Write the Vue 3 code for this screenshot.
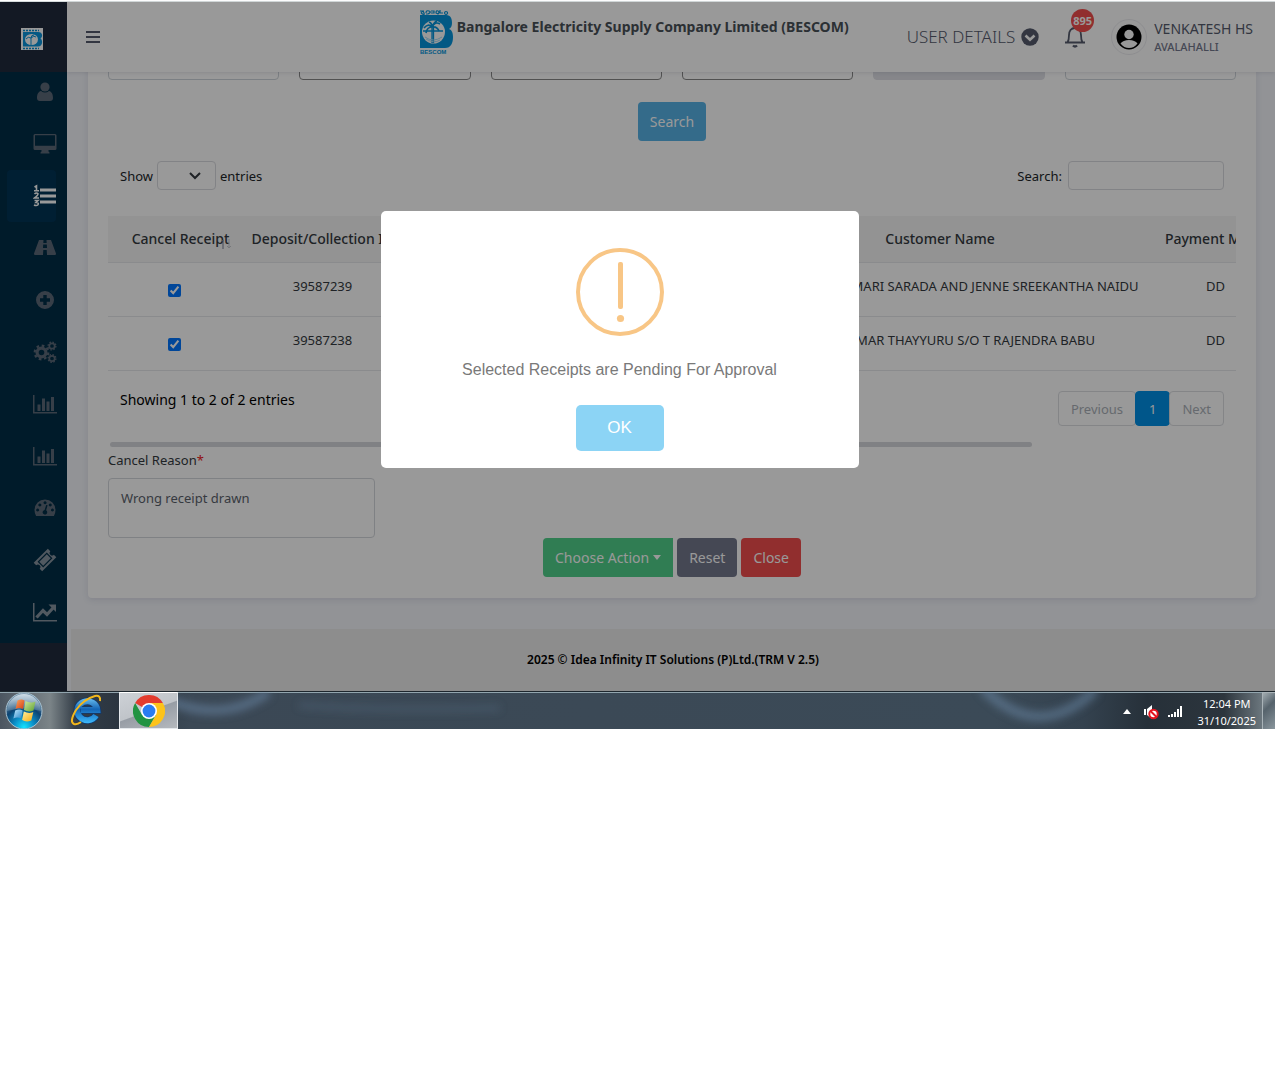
<script setup>
import { ref } from 'vue'

const navItems = [
  { name: 'Profile', icon: 'user' },
  { name: 'Dashboard', icon: 'desktop' },
  { name: 'Transactions', icon: 'list', active: true },
  { name: 'Routes', icon: 'road' },
  { name: 'Add', icon: 'plus' },
  { name: 'Settings', icon: 'cogs' },
  { name: 'Reports', icon: 'bars' },
  { name: 'MIS reports', icon: 'bars' },
  { name: 'Meters', icon: 'gauge' },
  { name: 'Tickets', icon: 'ticket' },
  { name: 'Trends', icon: 'trend' },
]

const filters = ['light', 'dark', 'dark', 'dark', 'disabled', 'light']

const rows = ref([
  { id: '39587239', customer: 'SMT BHAVANA KUMARI SARADA AND JENNE SREEKANTHA NAIDU', mode: 'DD', cancel: true },
  { id: '39587238', customer: 'MR SASI KUMAR THAYYURU S/O T RAJENDRA BABU', mode: 'DD', cancel: true },
])
const reason = ref('Wrong receipt drawn')
const query = ref('')
const dialogOpen = ref(true)
</script>

<template>
  <div class="screen">
    <div class="window">
      <aside class="sidebar">
        <a href="#" class="mini-logo" aria-label="BESCOM home">
          <svg viewBox="0 0 22 22" width="22" height="22">
            <rect width="22" height="22" fill="#fff" />
            <path d="M2 2.500h16M2 20.500h16" stroke="#0a8fd0" stroke-width="1.500" stroke-dasharray="2 1" />
            <path d="M2 4h15c5 0 5 5 2.500 6.500C22 12 22 18.500 17 18.500H2z" fill="#0a95dc" />
            <ellipse cx="10.500" cy="11.500" rx="6.500" ry="5.500" fill="#fff" />
            <path d="M10 17v-7M10 10q-3-2-5 1M10 10q3-3 5-1M10 10q0-3 3-3" stroke="#0a95dc" fill="none" />
          </svg>
        </a>
        <div class="nav-area">
          <nav class="nav">
            <a v-for="item in navItems" :key="item.name + item.icon" href="#" class="nav-item"
               :class="{ active: item.active, bright: item.icon === 'ticket' || item.icon === 'trend' }" :aria-label="item.name">
              <svg viewBox="0 0 24 24" width="24" height="24" fill="currentColor">
                <template v-if="item.icon === 'user'">
                  <circle cx="12" cy="7" r="4.600" />
                  <path d="M8 11q4 3 8 0c3 .5 4 4 4 7 0 2-1 3-3 3H7c-2 0-3-1-3-3 0-3 1-6.500 4-7z" />
                </template>
                <template v-else-if="item.icon === 'desktop'">
                  <path fill-rule="evenodd" d="M2 2h20a1.500 1.500 0 0 1 1.500 1.500v13A1.500 1.500 0 0 1 22 18h-6.500v1.500l1 1v1h-9v-1l1-1V18H2a1.500 1.500 0 0 1-1.500-1.500v-13A1.500 1.500 0 0 1 2 2zm0 1.200v10.600h20V3.200z" />
                </template>
                <template v-else-if="item.icon === 'list'">
                  <path d="M7 4.500h16v3H7zM7 10.500h16v3H7zM7 16.500h16v3H7z" />
                  <path d="M1.500 3 3.500 1.800v4.700M1 6.800h5M1.500 10Q3.500 8 5 9.800q0 1.500-3.500 4.200H6M1.500 16.500H5l-2 2q3 0 2 2.200-1.500 1.500-4 .3" fill="none" stroke="currentColor" stroke-width="1.600" />
                </template>
                <template v-else-if="item.icon === 'road'">
                  <path fill-rule="evenodd" d="M6 4h4.500l-.2 3h3.400l-.2-3H18l5 13.500q0 1.500-1 1.500h-8l-.3-5h-3.400L10 19H2q-1 0-1-1.500zm4.200 4.500L10 12h4l-.2-3.500z" />
                </template>
                <template v-else-if="item.icon === 'plus'">
                  <path fill-rule="evenodd" d="M12 3a9 9 0 1 1 0 18 9 9 0 0 1 0-18zm-1.700 4v3.300H7v3.400h3.300V17h3.400v-3.300H17v-3.400h-3.300V7z" />
                </template>
                <template v-else-if="item.icon === 'cogs'">
                  <circle cx="8.500" cy="12.500" r="4.400" fill="none" stroke="currentColor" stroke-width="3.200" />
                  <circle cx="8.500" cy="12.500" r="6.800" fill="none" stroke="currentColor" stroke-width="2.200" stroke-dasharray="2.670 2.670" />
                  <circle cx="19" cy="6" r="2.700" fill="none" stroke="currentColor" stroke-width="1.700" />
                  <circle cx="19" cy="6" r="3.900" fill="none" stroke="currentColor" stroke-width="1.300" stroke-dasharray="1.530 1.530" />
                  <circle cx="19" cy="18.500" r="2.700" fill="none" stroke="currentColor" stroke-width="1.700" />
                  <circle cx="19" cy="18.500" r="3.900" fill="none" stroke="currentColor" stroke-width="1.300" stroke-dasharray="1.530 1.530" />
                </template>
                <template v-else-if="item.icon === 'bars'">
                  <path d="M0 3h1.500v17H24v1.500H0zM4.500 12.500h3V19h-3zM9 6.500h3V19H9zM13.500 9.500h3V19h-3zM18 5h3v14h-3z" />
                </template>
                <template v-else-if="item.icon === 'gauge'">
                  <path fill-rule="evenodd" d="M12 3.500a10.500 10.500 0 0 1 10.500 10.500q0 3.300-1.600 6H3.100Q1.500 17.300 1.500 14A10.500 10.500 0 0 1 12 3.500zm0 1.800a1.500 1.500 0 1 0 .1 0zM6.800 7.500a1.500 1.500 0 1 0 .1 0zm10.400 0a1.500 1.500 0 1 0 .1 0zM4.600 12.600a1.500 1.500 0 1 0 .1 0zm14.800 0a1.500 1.500 0 1 0 .1 0zM13.200 9l-1.600 5a2.300 2.300 0 1 0 1.500.3L14.600 9.300z" />
                </template>
                <template v-else-if="item.icon === 'ticket'">
                  <g transform="rotate(-45 12 12)">
                    <path fill-rule="evenodd" d="M2 6h20v3.500a2.500 2.500 0 0 0 0 5V18H2v-3.500a2.500 2.500 0 0 0 0-5zm3.500 2v8h13V8zm1.200 1.200h10.600v5.600H6.700z" />
                  </g>
                </template>
                <template v-else>
                  <path d="M0 3h1.500v17H24v1.500H0z" />
                  <path d="m3.500 17.500 6.500-7 4 4L20 8" fill="none" stroke="currentColor" stroke-width="3.200" />
                  <path d="M15.500 4.500H23V12z" />
                </template>
              </svg>
            </a>
          </nav>
        </div>
      </aside>

      <div class="main">
        <header class="topbar">
          <button class="menu-btn" aria-label="Toggle menu">
            <svg viewBox="0 0 14 12" width="14" height="12"><path d="M0 1h14M0 6h14M0 11h14" stroke="#555b6d" stroke-width="2" /></svg>
          </button>
          <div class="brand">
            <svg viewBox="0 0 34 48" width="34" height="48">
              <path d="M1 3h4M2 5q2-3 3 0t-3 0M7 5q0-3 3-2t-1 3H7M12 3h3v2h-3M17 5q0-3 2-2t0 3zM21 2v3h3M27 3.500a1.500 1.500 0 1 0 .1 0" fill="none" stroke="#0695dc" stroke-width="1.200" />
              <path d="M1 7h26c5 0 6 4 6 8 0 3-1 5-3 6 3 1 4 4 4 8 0 6-2 11-8 11H1z" fill="#0695dc" />
              <circle cx="14.500" cy="24" r="11.500" fill="#fff" />
              <path d="M13 35V18M14.500 35V18M4 23h20" stroke="#0695dc" stroke-width="1.300" />
              <path d="M13 19q-4-4-8 1M13 19q-5 0-6 6M13 19q0-4-3-5M13 19q3-6 8-3M13 19q5-1 7 4M13 19q2-5 5-6" fill="none" stroke="#0695dc" stroke-width="1.700" />
              <path d="M6 29q8 6 17 0M7 31q8 5 14 1" stroke="#a4dcf7" fill="none" />
              <text x="1" y="46" font-family="Liberation Sans, sans-serif" font-weight="700" font-size="6" fill="#0695dc">BESCOM</text>
            </svg>
            <h1 class="brand-name">Bangalore Electricity Supply Company Limited (BESCOM)</h1>
          </div>
          <div class="account">
            <button class="details-btn">
              USER DETAILS
              <svg viewBox="0 0 18 18" width="18" height="18"><circle cx="9" cy="9" r="8.700" fill="#555b6d" /><path d="m4.500 7.500 4.500 4.300 4.500-4.300" stroke="#fff" stroke-width="2.600" fill="none" /></svg>
            </button>
            <button class="bell-btn" aria-label="Notifications">
              <svg viewBox="0 0 20 22" width="20" height="22" fill="none" stroke="#555b6d" stroke-width="1.800"><path d="M0 16.500h20M2.500 16.500C4 14 4 12 4 9c0-4 2-7 6-7s6 3 6 7c0 3 0 5 1.500 7.500" /><path d="M8 19.500q2 2 4 0" stroke-width="2.400" /></svg>
              <span class="badge">895</span>
            </button>
            <a href="#" class="user">
              <span class="avatar">
                <svg viewBox="0 0 26 26" width="26" height="26"><circle cx="13" cy="13" r="12.500" fill="#000" /><circle cx="13" cy="10.500" r="4.700" fill="#fff" /><path d="M4.500 19.500Q7 16 13 16t8.500 3.500Q18 24 13 24t-8.500-4.500z" fill="#fff" /></svg>
              </span>
              <span class="user-text">
                <span class="user-name">VENKATESH HS</span>
                <span class="user-place">AVALAHALLI</span>
              </span>
            </a>
          </div>
        </header>

        <div class="content">
          <section class="card">
            <div class="filters">
              <input v-for="(kind, i) in filters" :key="i" class="field" :class="kind" :disabled="kind === 'disabled'" :aria-label="'Filter ' + (i + 1)" />
            </div>
            <div class="actions search-row"><button class="btn info">Search</button></div>

            <div class="table-tools">
              <label class="length">Show
                <span class="select-wrap">
                  <select aria-label="Entries per page"><option></option></select>
                  <svg viewBox="0 0 12 8" width="12" height="8"><path d="m1 1 5 5 5-5" fill="none" stroke="#343a40" stroke-width="2" /></svg>
                </span>
                entries</label>
              <label class="find">Search: <input v-model="query" type="text" /></label>
            </div>

            <div class="table-box">
              <table>
                <colgroup><col class="c1" /><col class="c2" /><col class="c3" /><col class="c4" /><col class="c5" /></colgroup>
                <thead>
                  <tr>
                    <th class="sortable">Cancel Receipt
                      <svg class="sort" viewBox="0 0 12 12" width="12" height="12" fill="none"><path d="M3 11V2M1 4l2-2" stroke="#777d90" /><path d="M9 1v9M7 8l2 2 2-2" stroke="#c4c6cc" /></svg>
                    </th>
                    <th>Deposit/Collection ID</th>
                    <th></th>
                    <th>Customer Name</th>
                    <th>Payment Mode</th>
                  </tr>
                </thead>
                <tbody>
                  <tr v-for="row in rows" :key="row.id">
                    <td class="tick"><input v-model="row.cancel" type="checkbox" :aria-label="'Cancel receipt ' + row.id" /></td>
                    <td>{{ row.id }}</td>
                    <td></td>
                    <td>{{ row.customer }}</td>
                    <td>{{ row.mode }}</td>
                  </tr>
                </tbody>
              </table>
            </div>

            <div class="table-foot">
              <p>Showing 1 to 2 of 2 entries</p>
              <nav class="pager" aria-label="Pages">
                <button class="page">Previous</button>
                <button class="page current">1</button>
                <button class="page">Next</button>
              </nav>
            </div>
            <div class="scroll-track"><div class="scroll-thumb"></div></div>

            <label class="reason-label" for="reason">Cancel Reason<span class="req">*</span></label>
            <textarea id="reason" v-model="reason"></textarea>
            <div class="actions">
              <button class="btn success">Choose Action
                <svg viewBox="0 0 8 5" width="8" height="5"><path d="M0 0h8L4 5z" fill="#fff" /></svg>
              </button>
              <button class="btn secondary">Reset</button>
              <button class="btn danger">Close</button>
            </div>
          </section>
        </div>
        <footer class="footer">2025 © Idea Infinity IT Solutions (P)Ltd.(TRM V 2.5)</footer>
      </div>

      <div v-if="dialogOpen" class="overlay">
        <div class="dialog" role="alertdialog" aria-labelledby="dialog-text">
          <svg viewBox="0 0 88 88" width="88" height="88">
            <circle cx="44" cy="44" r="42" fill="none" stroke="#f8c686" stroke-width="4" />
            <rect x="42" y="14" width="5" height="47" rx="2" fill="#f8c686" />
            <circle cx="44.500" cy="70.500" r="3.600" fill="#f8c686" />
          </svg>
          <p id="dialog-text">Selected Receipts are Pending For Approval</p>
          <button class="ok" @click="dialogOpen = false">OK</button>
        </div>
      </div>
    </div>

    <div class="taskbar">
      <button class="start" aria-label="Start">
        <svg viewBox="0 0 38 38" width="38" height="38">
          <defs>
            <radialGradient id="orb" cx=".5" cy=".95" r=".8"><stop offset="0" stop-color="#16e4ff" /><stop offset=".35" stop-color="#0a8fc8" /><stop offset=".7" stop-color="#0c4372" /><stop offset="1" stop-color="#5f819c" /></radialGradient>
            <linearGradient id="gloss" x2="0" y2="1"><stop offset="0" stop-color="#e4eef5" stop-opacity=".85" /><stop offset="1" stop-color="#9bb8cc" stop-opacity=".3" /></linearGradient>
            <linearGradient id="wr" x2="1" y2="1"><stop offset="0" stop-color="#f8a45c" /><stop offset="1" stop-color="#d63d13" /></linearGradient>
            <linearGradient id="wg" x2="1" y2="1"><stop offset="0" stop-color="#d0e9a0" /><stop offset="1" stop-color="#5da030" /></linearGradient>
            <linearGradient id="wb" x2="1" y2="1"><stop offset="0" stop-color="#bfe6fb" /><stop offset="1" stop-color="#2485c8" /></linearGradient>
            <linearGradient id="wy" x2="1" y2="1"><stop offset="0" stop-color="#fff0a0" /><stop offset="1" stop-color="#f6ac10" /></linearGradient>
          </defs>
          <circle cx="19" cy="19" r="18" fill="url(#orb)" stroke="#a9c3d2" />
          <path d="M2 19a17 17 0 0 1 34 0Q19 14 2 19z" fill="url(#gloss)" />
          <path d="M12.500 8.500q4-2 7 0l-1.500 8.500q-4-2-7.500 0z" fill="url(#wr)" />
          <path d="M20.500 9q5 2.500 10 .5l-2 9q-5 2-9.500-.5z" fill="url(#wg)" />
          <path d="M10.200 18.500q4-2 7.500 0l-1.500 8q-4-2-7.800 0z" fill="url(#wb)" />
          <path d="M18.800 19.500q5 2.500 9.500.5l-2 8.500q-5 2-9.200-.5z" fill="url(#wy)" />
        </svg>
      </button>
      <button class="ie" aria-label="Internet Explorer">
        <svg viewBox="0 0 34 34" width="34" height="34">
          <defs><linearGradient id="ieb" gradientUnits="userSpaceOnUse" x1="0" y1="5" x2="0" y2="30"><stop offset="0" stop-color="#6cc0f0" /><stop offset=".45" stop-color="#1464b4" /><stop offset="1" stop-color="#3cb8fa" /></linearGradient></defs>
          <path d="M27 22.500a10 9.500 0 1 1 1.300-5.500H12" fill="none" stroke="#12396c" stroke-width="7.500" />
          <path d="M27 22.500a10 9.500 0 1 1 1.300-5.500H12" fill="none" stroke="url(#ieb)" stroke-width="6" />
          <path d="M31 8q1-6-5-5Q15 6 7 17 0 29 5 31q3 1 7-2" fill="none" stroke="#f2b71c" stroke-width="2" />
        </svg>
      </button>
      <button class="chrome" aria-label="Chrome">
        <svg viewBox="0 0 32 32" width="32" height="32">
          <path d="M16 16 2.140 8A16 16 0 0 1 29.860 8z" fill="#e33b2e" />
          <path d="M9.070 20 2.140 8A16 16 0 0 0 16 32l6.930-12z" fill="#229342" />
          <path d="M16 8h13.860A16 16 0 0 1 16 32l6.930-12z" fill="#fcc31a" />
          <circle cx="16" cy="16" r="8" fill="#fff" /><circle cx="16" cy="16" r="6.400" fill="#2a7cf0" />
        </svg>
      </button>
      <div class="glow">
        <svg viewBox="0 0 940 36" preserveAspectRatio="none" width="100%" height="36" fill="none">
          <defs><filter id="soft" x="-10%" y="-50%" width="120%" height="200%"><feGaussianBlur stdDeviation="4" /></filter></defs>
          <g filter="url(#soft)" stroke="#6e8cab">
            <path d="M-10 8q55 24 100-8" stroke-width="8" opacity=".6" />
            <path d="M120 13q80 6 200 3" stroke-width="5" opacity=".25" />
            <path d="M800-4q55 56 112 2" stroke-width="9" opacity=".55" />
          </g>
        </svg>
      </div>
      <div class="tray">
        <svg viewBox="0 0 8 5" width="8" height="5"><path d="M0 5h8L4 0z" fill="#fff" /></svg>
        <svg viewBox="0 0 16 16" width="16" height="16"><path d="M1 5h2v6H1zM4 5l5-4v14l-5-4z" fill="#fff" /><circle cx="10.500" cy="10" r="4.200" fill="#fff" stroke="#e3141e" stroke-width="2" /><path d="m7.500 7 6 6" stroke="#e3141e" stroke-width="2" /></svg>
        <svg viewBox="0 0 15 12" width="15" height="12"><path d="M0 9h2v2H0zM3 8h2v3H3zM6 6h2v5H6zM9 3h2v8H9zM12 0h2v11h-2z" fill="#fff" /></svg>
        <div class="clock"><span>12:04 PM</span><span>31/10/2025</span></div>
      </div>
      <button class="peek" aria-label="Show desktop"></button>
    </div>
  </div>
</template>

<style>
body { background: #fff; }
</style>

<style scoped>
* { box-sizing: border-box; }
button, input, select, textarea { font: inherit; margin: 0; }
button { border: 0; background: none; padding: 0; }
a { text-decoration: none; color: inherit; }
svg { display: block; flex: none; }
p, h1 { margin: 0; }

.screen {
  font-family: "Noto Sans", sans-serif;
  font-size: 13px;
  line-height: 20px;
  color: #343a40;
  padding-top: 2px;
  background: linear-gradient(#fff 1px, #d5dbdc 1px, #d5dbdc 2px, #fff 2px);
}
.window { position: relative; display: flex; background: #f3f5fa; }

.sidebar { flex: 0 0 67px; background: #212b3c; }
.mini-logo { display: flex; align-items: center; justify-content: center; height: 70px; padding: 4px 3px 0 0; }
.nav-area { overflow: hidden; background: #002d46; padding-bottom: 5px; }
.nav { margin-top: -6px; }
.nav-item { display: flex; align-items: center; justify-content: flex-end; height: 52px; margin: 0 11px 0 7px; border-radius: 4px; color: #5d6a79; }
.nav-item svg { margin-right: -1px; }
.nav-item.bright { color: #8794a0; }
.nav-item.active { background: #003556; color: #fff; }

.main { flex: 1; min-width: 0; }
.topbar { position: relative; display: flex; align-items: center; height: 70px; padding: 0 22px 0 19px; background: #fff; box-shadow: 0 1px 4px rgba(40, 45, 70, .12); }
.brand { display: flex; align-items: flex-start; gap: 4px; height: 58px; margin: 0 58px 0 auto; }
.brand-name { font-size: 14px; line-height: 20px; font-weight: 700; color: #495057; padding-top: 9px; white-space: nowrap; }
.account { display: flex; align-items: center; color: #555b6d; white-space: nowrap; }
.details-btn { display: flex; align-items: center; gap: 6px; font-size: 17px; line-height: 24px; font-weight: 300; color: #555b6d; }
.bell-btn { position: relative; margin-left: 26px; }
.badge { position: absolute; left: 6px; top: -17px; width: 23px; height: 23px; border-radius: 50%; background: #f24d4d; color: #fff; font-size: 11px; line-height: 23px; font-weight: 700; text-align: center; }
.user { display: flex; align-items: center; gap: 7px; margin-left: 26px; }
.avatar { display: flex; padding: 4px; border: 1px solid #ececf0; border-radius: 50%; }
.user-text { display: flex; flex-direction: column; }
.user-name { font-size: 14px; line-height: 20px; }
.user-place { font-size: 11px; line-height: 16px; font-weight: 500; color: #74788d; }

.content { overflow: hidden; padding: 0 19px 31px 21px; }
.card { background: #fff; border-radius: 0 0 4px 4px; padding: 0 20px 21px; box-shadow: 0 2px 6px rgba(60, 60, 110, .12); }
.filters { display: grid; grid-template-columns: repeat(6, 1fr); gap: 20px; margin-top: -30px; }
.field { width: 100%; height: 38px; border: 1px solid #ced4da; border-radius: 4px; background: #fff; }
.field.dark { border-color: #888; }
.field.disabled { background: #dfe0e6; border-color: #dfe0e6; }
.actions { display: flex; justify-content: center; gap: 4px; }
.search-row { margin: 22px 0 20px; }
.btn { display: flex; align-items: center; gap: 4px; height: 39px; padding: 0 12px; border-radius: 4px; color: #fff; font-size: 14px; }
.info { background: #57b2e6; }
.success { background: #50d08a; border-radius: 4px 0 0 4px; }
.secondary { background: #74788d; }
.danger { background: #f24d4d; }

.table-tools { display: flex; justify-content: space-between; padding: 0 12px; margin-bottom: 26px; }
.length, .find { display: flex; align-items: center; gap: 4px; color: #212529; }
.find { gap: 6px; }
.select-wrap { display: flex; align-items: center; }
.select-wrap svg { margin: 0 15px 0 -27px; pointer-events: none; }
select { width: 59px; height: 29px; border: 1px solid #d9dbe0; border-radius: 4px; background: #fff; appearance: none; }
.find input { width: 156px; height: 29px; border: 1px solid #d9dbe0; border-radius: 4px; background: #fff; }

.table-box { overflow: hidden; }
table { width: 1172px; table-layout: fixed; border-collapse: separate; border-spacing: 0; }
.c1 { width: 133px; }
.c2 { width: 163px; }
.c3 { width: 325px; }
.c4 { width: 422px; }
.c5 { width: 129px; }
th, td { text-align: center; vertical-align: top; white-space: nowrap; padding: 13px 0 20px; border-bottom: 1px solid #e6e8ec; }
th { background: #f5f5f6; font-size: 14px; font-weight: 500; padding: 13px 0; color: #343a40; }
.sortable { position: relative; padding-left: 12px; }
.sort { position: absolute; left: 112px; top: 22px; }
.tick { padding-bottom: 19px; }
.tick input { display: block; width: 13px; height: 13px; margin: 8px auto 0; }

.table-foot { display: flex; align-items: flex-start; justify-content: space-between; padding: 0 12px; margin-top: 20px; color: #000; }
.table-foot p { font-size: 14px; line-height: 18px; }
.pager { display: flex; }
.page { height: 35px; padding: 0 12px; border: 1px solid #dcdee2; border-radius: 4px; color: #aab0b8; margin-left: -1px; }
.page.current { padding: 0 13px; background: #008fe6; border-color: #008fe6; color: #fff; }
.scroll-track { margin: 16px 0 3px; padding: 0 2px; }
.scroll-thumb { width: 82%; height: 5px; border-radius: 3px; background: #d6d8dc; }
.reason-label { display: block; margin-bottom: 8px; }
.req { color: #f01818; }
textarea { display: block; width: 267px; height: 60px; padding: 9px 12px; border: 1px solid #d4d7dc; border-radius: 4px; color: #5b626c; background: #fff; resize: none; overflow: hidden; }
.footer { padding: 21px 0; margin-left: 4px; background: #ebebeb; color: #000; font-size: 12px; font-weight: 600; text-align: center; }

.overlay { position: absolute; inset: 0; background: rgba(0, 0, 0, .4); }
.dialog { position: absolute; left: 50%; top: 50%; width: 478px; margin: -136px 0 0 -257px; padding: 37px 17px 17px; border-radius: 5px; background: #fff; display: flex; flex-direction: column; align-items: center; font-family: "Liberation Sans", Arial, sans-serif; }
.dialog p { margin: 23px 0 24px; font-size: 16px; line-height: 22px; color: #797979; }
.ok { width: 88px; height: 46px; border-radius: 5px; background: #8cd4f5; color: #fff; font-size: 17px; }

.taskbar { display: flex; height: 38px; border-top: 1px solid #1d262d; box-shadow: inset 0 1px #92a5ae; background: linear-gradient(90deg, #4b5560 0, #7b8488 50px, #343e48 75px, #2b3540 118px, #3b4855 190px, #3b4a57 78%, #34424f 85%, #263039 90%, #2c353d 96%, #6c777e 99%); }
.start { width: 38px; margin-left: 5px; }
.ie { margin: 0 16px 2px 26px; }
.chrome { display: flex; align-items: center; justify-content: center; width: 59px; border: 1px solid #e4e8ec; border-top-color: #fff; background: linear-gradient(160deg, #cdd1d6 0, #c0c4c9 50%, #979da5 52%, #b5b9be 100%); }
.glow { flex: 1; min-width: 0; overflow: hidden; }
.tray { display: flex; align-items: center; gap: 9px; padding: 2px 6px 0 0; color: #fff; }
.tray > svg:first-child { margin-right: 3px; }
.clock { display: flex; flex-direction: column; align-items: center; margin-left: 5px; font-size: 11px; line-height: 17px; }
.peek { width: 13px; border: 1px solid #a9b3b8; border-right: 0; border-bottom: 0; background: linear-gradient(135deg, #a1abb0, #56636c 40%, #8a969d); }
</style>
